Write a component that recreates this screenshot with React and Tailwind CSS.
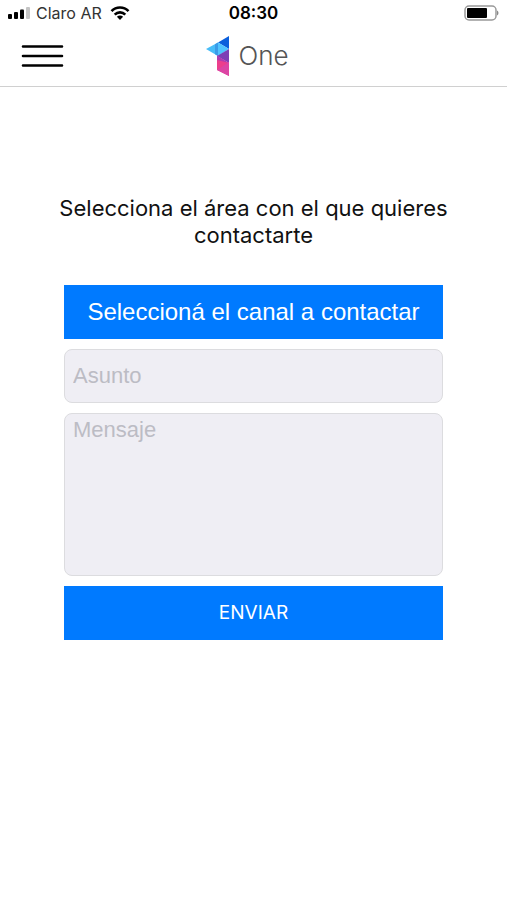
import { useState } from "react";

const StatusBar = () => (
  <div className="grid grid-cols-3 items-center h-[26px] px-2 font-['Inter',sans-serif] text-black">
    <div className="flex items-center">
      <svg className="w-6 h-3" viewBox="0 0 24 12" aria-hidden="true">
        <rect x="0" y="7" width="4" height="5" rx="1" />
        <rect x="6" y="5" width="4" height="7" rx="1" />
        <rect x="12" y="2.500" width="4" height="9.500" rx="1" />
        <rect x="18" y="0" width="4" height="12" rx="1" fill="#c4c4c4" />
      </svg>
      <span className="ml-1 text-base leading-5 text-[#333] whitespace-nowrap">Claro AR</span>
      <svg className="w-5 h-4 ml-2" viewBox="0 0 20 16" fill="none" stroke="#000" strokeWidth="2.600" aria-hidden="true">
        <path d="M1.500 6.200C6.200 1.300 13.800 1.300 18.500 6.200" />
        <path d="M4.700 9.600C7.700 6.600 12.300 6.600 15.300 9.600" />
        <path d="M10 15L6.900 11.800C8.700 10.200 11.300 10.200 13.100 11.800Z" fill="#000" stroke="none" />
      </svg>
    </div>
    <span className="text-center text-[17px] leading-5 font-semibold">08:30</span>
    <svg className="w-9 h-4 justify-self-end" viewBox="0 0 36 16" aria-hidden="true">
      <rect x="2" y="1" width="31" height="14" rx="4" fill="#fff" stroke="#999" strokeWidth="1.500" />
      <rect x="4" y="3" width="20" height="10" rx="1" />
      <path d="M34 5.500C36 6.500 36 9.500 34 10.500Z" fill="#888" />
    </svg>
  </div>
);

const Logo = () => (
  <div className="flex items-center gap-2 pr-3">
    <svg className="w-6 h-10" viewBox="0 0 24 40" aria-hidden="true">
      <path d="M0 13L12 6.500V20Z" fill="#48bdf8" />
      <path d="M12 6.500L23 0V13Z" fill="#0b5fdc" />
      <path d="M12 6.500L23 13L12 20Z" fill="#50c4ff" />
      <path d="M9 8.200L12 6.500V20L9 18.300Z" fill="#3a9be8" />
      <path d="M23 13V27L11 20Z" fill="#7d3fb5" />
      <path d="M11 19.500L23 27H11Z" fill="#b03bb0" />
      <path d="M11 24L23 27V40L11 34Z" fill="#ec3f8c" />
      <path d="M23 26V40L11 34Z" fill="#dc45a4" />
    </svg>
    <span className="font-['Inter','Liberation_Sans',sans-serif] font-light text-[26px] leading-8 text-[#555]">
      One
    </span>
  </div>
);

const Header = () => (
  <header className="grid grid-cols-[1fr_auto_1fr] items-center h-[61px] px-5 border-b border-[#d0d0d0]">
    <button type="button" aria-label="Abrir menú" className="justify-self-start">
      <svg className="w-11 h-6" viewBox="0 0 44 24" stroke="#000" strokeWidth="2.600" strokeLinecap="round" aria-hidden="true">
        <path d="M3 2.500H42M3 12H42M3 21.500H42" />
      </svg>
    </button>
    <Logo />
  </header>
);

const App = () => {
  const [formData, setFormData] = useState({ subject: "", message: "" });

  const handleInputChange = (e) => {
    const { name, value } = e.target;
    setFormData((prev) => ({ ...prev, [name]: value }));
  };

  const handleSubmit = (e) => {
    e.preventDefault();
  };

  return (
    <div className="min-h-screen bg-white">
      <StatusBar />
      <Header />

      <main className="px-16 pt-27">
        <h1 className="-mx-2 text-center font-['Inter',sans-serif] text-[22px] leading-[27px] text-[#111]">
          Selecciona el área con el que quieres contactarte
        </h1>

        <form onSubmit={handleSubmit} className="flex flex-col gap-[10px] mt-9 font-['Liberation_Sans',sans-serif]">
          <button
            type="button"
            className="h-[54px] bg-[#007aff] text-white text-[24px] leading-7 font-medium"
          >
            Seleccioná el canal a contactar
          </button>
          <input
            type="text"
            name="subject"
            aria-label="Asunto"
            placeholder="Asunto"
            value={formData.subject}
            onChange={handleInputChange}
            className="h-[54px] px-2 rounded-lg border border-[#dcdcdf] bg-[#efeef4] text-[22px] leading-7 placeholder:text-[#bcbcc4] focus:outline-none"
          />
          <textarea
            name="message"
            aria-label="Mensaje"
            placeholder="Mensaje"
            value={formData.message}
            onChange={handleInputChange}
            className="h-[163px] px-2 py-0.5 rounded-lg border border-[#dcdcdf] bg-[#efeef4] text-[22px] leading-7 placeholder:text-[#bcbcc4] resize-none focus:outline-none"
          />
          <button
            type="submit"
            className="h-[54px] bg-[#007aff] text-white font-['Inter',sans-serif] text-[19px] leading-6"
          >
            ENVIAR
          </button>
        </form>
      </main>
    </div>
  );
};

export default App;
